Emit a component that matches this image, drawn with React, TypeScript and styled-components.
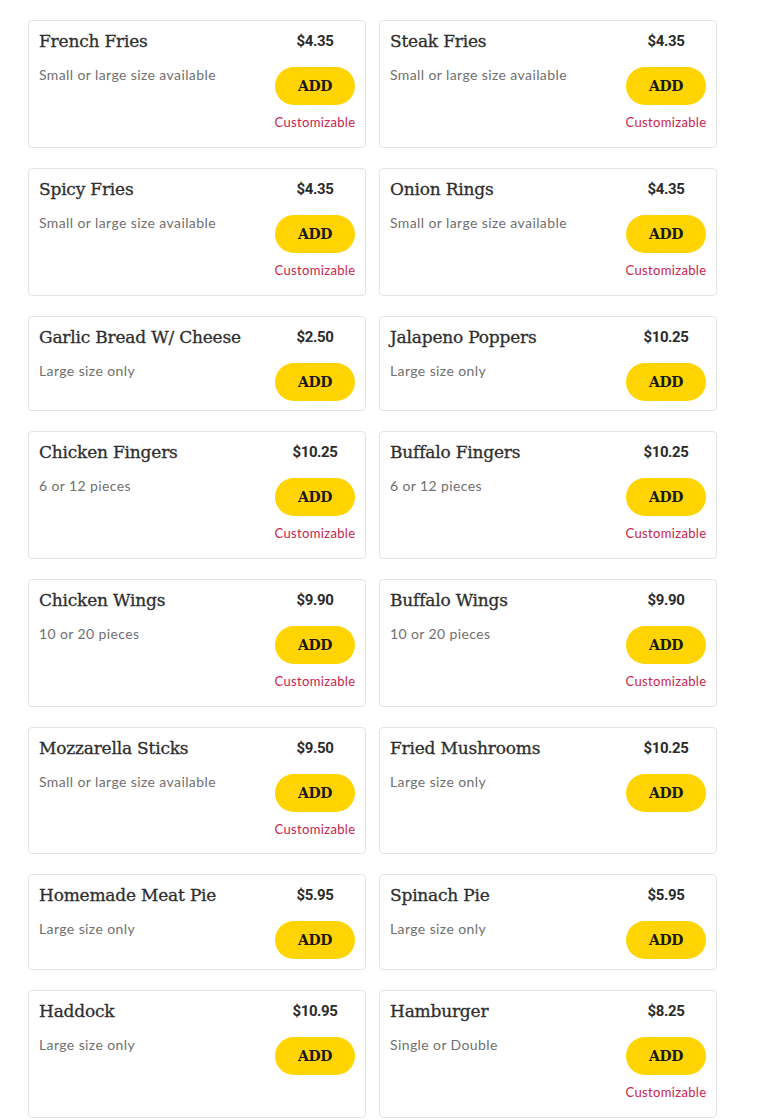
import React from "react";
import styled, { createGlobalStyle } from "styled-components";

const Global = createGlobalStyle`
  html, body { margin: 0; padding: 0; background: #ffffff; }
  body { font-family: Lato, "Noto Sans", sans-serif; }
`;

const Page = styled.div`
  padding: 20px 28px 0 28px;
`;

const Grid = styled.div`
  display: grid;
  grid-template-columns: 338px 338px;
  column-gap: 13px;
  row-gap: 20px;
`;

const Card = styled.div`
  box-sizing: border-box;
  border: 1px solid #e4e4e4;
  border-radius: 4px;
  background: #fff;
  display: flex;
  justify-content: space-between;
  padding: 10px 10px 9.5px 10px;
`;

const Info = styled.div`
  display: flex;
  flex-direction: column;
  min-width: 0;
`;

const Title = styled.div`
  font-family: "DejaVu Serif", serif;
  font-size: 17px;
  line-height: 20px;
  color: #2e2e2e;
  letter-spacing: -0.2px;
  white-space: nowrap;
  -webkit-text-stroke: 0.3px #2e2e2e;
`;

const Desc = styled.div`
  margin-top: 16px;
  font-family: Lato, "Noto Sans", sans-serif;
  font-size: 14px;
  line-height: 16px;
  color: #707070;
  letter-spacing: 0.4px;
`;

const Side = styled.div`
  width: 80px;
  display: flex;
  flex-direction: column;
  align-items: center;
  flex-shrink: 0;
`;

const Price = styled.div`
  font-family: Roboto, "Liberation Sans", sans-serif;
  font-weight: 700;
  font-size: 15px;
  line-height: 20px;
  color: #2b2b2b;
  letter-spacing: -0.4px;
`;

const AddButton = styled.button`
  margin-top: 16px;
  width: 80px;
  height: 38px;
  border: none;
  border-radius: 19px;
  background: #ffd400;
  font-family: "DejaVu Serif", serif;
  font-weight: 700;
  font-size: 14px;
  color: #1a1a1a;
  letter-spacing: -0.3px;
  padding: 0;
  cursor: pointer;
`;

const Custom = styled.div`
  margin-top: 10px;
  margin-bottom: 7.3px;
  font-family: Lato, "Noto Sans", sans-serif;
  font-size: 13px;
  line-height: 15px;
  color: #c8244d;
  letter-spacing: 0.35px;
  white-space: nowrap;
`;

type Item = { name: string; price: string; desc: string; custom: boolean };

const items: Item[] = [
  { name: "French Fries", price: "$4.35", desc: "Small or large size available", custom: true },
  { name: "Steak Fries", price: "$4.35", desc: "Small or large size available", custom: true },
  { name: "Spicy Fries", price: "$4.35", desc: "Small or large size available", custom: true },
  { name: "Onion Rings", price: "$4.35", desc: "Small or large size available", custom: true },
  { name: "Garlic Bread W/ Cheese", price: "$2.50", desc: "Large size only", custom: false },
  { name: "Jalapeno Poppers", price: "$10.25", desc: "Large size only", custom: false },
  { name: "Chicken Fingers", price: "$10.25", desc: "6 or 12 pieces", custom: true },
  { name: "Buffalo Fingers", price: "$10.25", desc: "6 or 12 pieces", custom: true },
  { name: "Chicken Wings", price: "$9.90", desc: "10 or 20 pieces", custom: true },
  { name: "Buffalo Wings", price: "$9.90", desc: "10 or 20 pieces", custom: true },
  { name: "Mozzarella Sticks", price: "$9.50", desc: "Small or large size available", custom: true },
  { name: "Fried Mushrooms", price: "$10.25", desc: "Large size only", custom: false },
  { name: "Homemade Meat Pie", price: "$5.95", desc: "Large size only", custom: false },
  { name: "Spinach Pie", price: "$5.95", desc: "Large size only", custom: false },
  { name: "Haddock", price: "$10.95", desc: "Large size only", custom: false },
  { name: "Hamburger", price: "$8.25", desc: "Single or Double", custom: true },
];

export default function App() {
  return (
    <>
      <Global />
      <Page>
        <Grid>
          {items.map((it) => (
            <Card key={it.name}>
              <Info>
                <Title>{it.name}</Title>
                <Desc>{it.desc}</Desc>
              </Info>
              <Side>
                <Price>{it.price}</Price>
                <AddButton>ADD</AddButton>
                {it.custom && <Custom>Customizable</Custom>}
              </Side>
            </Card>
          ))}
        </Grid>
      </Page>
    </>
  );
}
